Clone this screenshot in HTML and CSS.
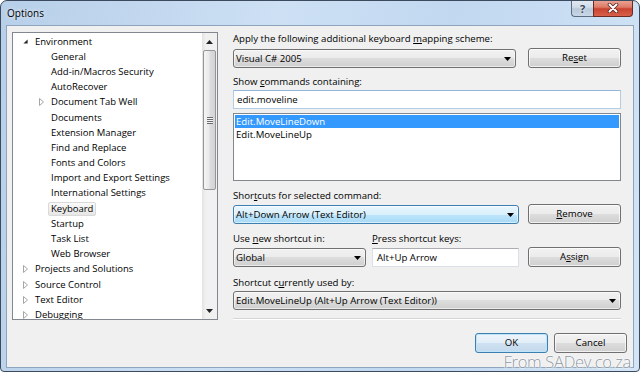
FILE: index.html
```html
<!DOCTYPE html>
<html lang="en">
<head>
<meta charset="UTF-8">
<meta name="viewport" content="width=device-width, initial-scale=1.0">
<title>Options</title>
<link rel="stylesheet" href="styles.css">
</head>
<body>
    <div class="window">
        <!-- Title bar with help and close buttons -->
        <div class="titlebar">
            <span class="title">Options</span>
            <div class="caption">
                <div class="cap-btn help">?</div>
                <div class="cap-btn close">
                    <svg width="12" height="10" viewBox="0 0 12 10"><path d="M2.5 1.5L9.5 8.5M9.5 1.5L2.5 8.5" stroke="#5a2a24" stroke-width="3.6" stroke-linecap="round"/><path d="M2.5 1.5L9.5 8.5M9.5 1.5L2.5 8.5" stroke="#fff" stroke-width="2" stroke-linecap="round"/></svg>
                </div>
            </div>
        </div>

        <div class="client">
            <div class="main">
                <!-- Category tree -->
                <div class="tree">
                    <div class="tree-items">
                        <div class="node l1"><span class="exp"><svg width="5" height="5" viewBox="0 0 5 5"><path d="M4.6 0.4V4.6H0.4z" fill="#262626"/></svg></span><span class="lbl">Environment</span></div>
                        <div class="node l2"><span class="exp"></span><span class="lbl">General</span></div>
                        <div class="node l2"><span class="exp"></span><span class="lbl">Add-in/Macros Security</span></div>
                        <div class="node l2"><span class="exp"></span><span class="lbl">AutoRecover</span></div>
                        <div class="node l2"><span class="exp"><svg width="5" height="8" viewBox="0 0 5 8"><path d="M0.5 0.5L4.5 4L0.5 7.5z" fill="#fff" stroke="#a6a6a6"/></svg></span><span class="lbl">Document Tab Well</span></div>
                        <div class="node l2"><span class="exp"></span><span class="lbl">Documents</span></div>
                        <div class="node l2"><span class="exp"></span><span class="lbl">Extension Manager</span></div>
                        <div class="node l2"><span class="exp"></span><span class="lbl">Find and Replace</span></div>
                        <div class="node l2"><span class="exp"></span><span class="lbl">Fonts and Colors</span></div>
                        <div class="node l2"><span class="exp"></span><span class="lbl">Import and Export Settings</span></div>
                        <div class="node l2"><span class="exp"></span><span class="lbl">International Settings</span></div>
                        <div class="node l2"><span class="exp"></span><span class="lbl sel">Keyboard</span></div>
                        <div class="node l2"><span class="exp"></span><span class="lbl">Startup</span></div>
                        <div class="node l2"><span class="exp"></span><span class="lbl">Task List</span></div>
                        <div class="node l2"><span class="exp"></span><span class="lbl">Web Browser</span></div>
                        <div class="node l1"><span class="exp"><svg width="5" height="8" viewBox="0 0 5 8"><path d="M0.5 0.5L4.5 4L0.5 7.5z" fill="#fff" stroke="#a6a6a6"/></svg></span><span class="lbl">Projects and Solutions</span></div>
                        <div class="node l1"><span class="exp"><svg width="5" height="8" viewBox="0 0 5 8"><path d="M0.5 0.5L4.5 4L0.5 7.5z" fill="#fff" stroke="#a6a6a6"/></svg></span><span class="lbl">Source Control</span></div>
                        <div class="node l1"><span class="exp"><svg width="5" height="8" viewBox="0 0 5 8"><path d="M0.5 0.5L4.5 4L0.5 7.5z" fill="#fff" stroke="#a6a6a6"/></svg></span><span class="lbl">Text Editor</span></div>
                        <div class="node l1"><span class="exp"><svg width="5" height="8" viewBox="0 0 5 8"><path d="M0.5 0.5L4.5 4L0.5 7.5z" fill="#fff" stroke="#a6a6a6"/></svg></span><span class="lbl">Debugging</span></div>
                    </div>
                    <div class="vscroll">
                        <div class="sb-arrow"><svg width="7" height="4" viewBox="0 0 7 4"><path d="M0 4H7L3.5 0z" fill="#222"/></svg></div>
                        <div class="thumb"><span class="grip"></span></div>
                        <div class="sb-fill"></div>
                        <div class="sb-arrow"><svg width="7" height="4" viewBox="0 0 7 4"><path d="M0 0H7L3.5 4z" fill="#222"/></svg></div>
                    </div>
                </div>

                <!-- Keyboard page -->
                <div class="panel">
                    <div class="label">Apply the following additional keyboard <u>m</u>apping scheme:</div>
                    <div class="row first">
                        <div class="combo w-scheme"><span class="combo-text">Visual C# 2005</span><svg width="7" height="4" viewBox="0 0 7 4"><path d="M0 0H7L3.5 4z" fill="#000"/></svg></div>
                        <div class="btn">Re<u>s</u>et</div>
                    </div>

                    <div class="label gap7">Show <u>c</u>ommands containing:</div>
                    <div class="input focus">edit.moveline</div>
                    <div class="listbox">
                        <div class="item selected">Edit.MoveLineDown</div>
                        <div class="item">Edit.MoveLineUp</div>
                    </div>

                    <div class="label gap8">Shor<u>t</u>cuts for selected command:</div>
                    <div class="row">
                        <div class="combo hot w-short"><span class="combo-text">Alt+Down Arrow (Text Editor)</span><svg width="7" height="4" viewBox="0 0 7 4"><path d="M0 0H7L3.5 4z" fill="#000"/></svg></div>
                        <div class="btn"><u>R</u>emove</div>
                    </div>

                    <div class="label-row">
                        <div class="label w-use">Use <u>n</u>ew shortcut in:</div>
                        <div class="label"><u>P</u>ress shortcut keys:</div>
                    </div>
                    <div class="row">
                        <div class="combo w-global"><span class="combo-text">Global</span><svg width="7" height="4" viewBox="0 0 7 4"><path d="M0 0H7L3.5 4z" fill="#000"/></svg></div>
                        <div class="input w-keys">Alt+Up Arrow</div>
                        <div class="btn">A<u>s</u>sign</div>
                    </div>

                    <div class="label gap9">Shortcut c<u>u</u>rrently used by:</div>
                    <div class="combo full"><span class="combo-text">Edit.MoveLineUp (Alt+Up Arrow (Text Editor))</span><svg width="7" height="4" viewBox="0 0 7 4"><path d="M0 0H7L3.5 4z" fill="#000"/></svg></div>

                    <div class="separator"></div>
                </div>
            </div>

            <div class="footer">
                <div class="btn default">OK</div>
                <div class="btn">Cancel</div>
            </div>
        </div>

        <div class="watermark">From SADev.co.za</div>
    </div>
</body>
</html>
```

FILE: styles.css
```css
body {
    margin: 0;
    background: #ffffff;
    font-family: "Open Sans", "Noto Sans", sans-serif;
    font-size: 9.5px;
    color: #000;
}

u {
    text-decoration-thickness: 1px;
    text-underline-offset: 1px;
}

/* Window frame */
.window {
    width: 640px;
    height: 372px;
    box-sizing: border-box;
    border: 1px solid #3b4b5d;
    border-radius: 7px 7px 4px 4px;
    background: linear-gradient(100deg, #b7cfe9 0%, #cde0f4 40%, #c1d8f0 65%, #d2e4f6 100%);
    display: flex;
    flex-direction: column;
    position: relative;
    overflow: hidden;
}

.titlebar {
    height: 24px;
    flex-shrink: 0;
    display: flex;
    align-items: flex-start;
}

.title {
    padding: 5px 0 0 6px;
    line-height: 14px;
    font-size: 10px;
    text-shadow: 0 0 4px rgba(255, 255, 255, 0.9);
}

.caption {
    margin-left: auto;
    margin-right: 6px;
    margin-top: -1px;
    display: flex;
}

.cap-btn {
    height: 17px;
    box-sizing: border-box;
    border: 1px solid #5d6d80;
    border-top: none;
    display: flex;
    align-items: center;
    justify-content: center;
}

.help {
    width: 22px;
    border-right: none;
    border-radius: 0 0 0 4px;
    background: linear-gradient(#e4ebf3, #cfdbe8 45%, #b9c9db 55%, #c9d7e6);
    color: #34465a;
    font-weight: bold;
    font-size: 11px;
    text-shadow: 0 0 2px #fff;
}

.close {
    width: 40px;
    border-color: #6b2a22;
    border-radius: 0 0 4px 0;
    background: linear-gradient(#eaa89a, #dd7a67 45%, #c9432f 55%, #d8604a);
}

/* Client area */
.client {
    margin: 0 5px;
    height: 343px;
    box-sizing: border-box;
    border: 1px solid #8ea5bd;
    background: #f0f0f0;
    display: flex;
    flex-direction: column;
}

.main {
    display: flex;
    padding: 6px 12px 0 5px;
}

/* Tree view */
.tree {
    width: 206px;
    height: 288px;
    box-sizing: border-box;
    border: 1px solid #828790;
    background: #fff;
    display: flex;
}

.tree-items {
    flex: 1;
    overflow: hidden;
    padding-top: 1px;
}

.node {
    height: 15.2px;
    display: flex;
    align-items: center;
    white-space: nowrap;
}

.l1 {
    padding-left: 3px;
}

.l2 {
    padding-left: 19px;
}

.exp {
    width: 16px;
    flex-shrink: 0;
    box-sizing: border-box;
    padding-left: 7px;
    display: flex;
    align-items: center;
}

.lbl {
    padding: 0 2px;
    border: 1px solid transparent;
    border-radius: 2px;
    line-height: 12px;
}

.lbl.sel {
    border-color: #d9d9d9;
    background: linear-gradient(#fafafa, #e6e6e6);
}

.vscroll {
    width: 15px;
    display: flex;
    flex-direction: column;
    background: linear-gradient(to right, #e3e3e3, #f1f1f1 25%, #f0f0f0);
}

.sb-arrow {
    height: 17px;
    display: flex;
    align-items: center;
    justify-content: center;
}

.thumb {
    height: 140px;
    margin: 0 1px;
    box-sizing: border-box;
    border: 1px solid #959595;
    border-radius: 2px;
    background: linear-gradient(to right, #f5f5f5, #e9e9e9 45%, #dcdcdc 55%, #d3d3d3);
    display: flex;
    align-items: center;
    justify-content: center;
}

.grip {
    width: 6px;
    height: 7px;
    background: repeating-linear-gradient(#6a6a6a 0 1px, #f4f4f4 1px 2px);
}

.sb-fill {
    flex: 1;
}

/* Right page */
.panel {
    width: 388px;
    margin-left: 15px;
    display: flex;
    flex-direction: column;
    font-size: 9.65px;
}

.label {
    height: 14px;
    line-height: 14px;
    white-space: nowrap;
}

.gap7 {
    margin-top: 7px;
}

.gap8 {
    margin-top: 8px;
}

.gap9 {
    margin-top: 9px;
}

.row {
    display: flex;
    align-items: flex-end;
    height: 20px;
    margin-top: 1px;
}

.row.first {
    margin-top: 2px;
}

.row .btn {
    margin-left: auto;
}

.label-row {
    display: flex;
    margin-top: 8px;
}

.w-use {
    width: 139px;
}

.combo {
    height: 19px;
    box-sizing: border-box;
    border: 1px solid #707070;
    border-radius: 3px;
    padding: 0 4px 0 2px;
    background: linear-gradient(#f2f2f2, #ebebeb 50%, #dddddd 50%, #cfcfcf);
    box-shadow: inset 0 0 0 1px rgba(255, 255, 255, 0.55);
    display: flex;
    align-items: center;
    white-space: nowrap;
}

.combo.hot {
    border-color: #3c7fb1;
    background: linear-gradient(#eaf6fd, #d9f0fc 50%, #bee6fd 50%, #a7d9f5);
}

.combo-text {
    flex: 1;
}

.w-scheme {
    width: 283px;
}

.w-short {
    width: 286px;
}

.w-global {
    width: 133px;
}

.combo.full {
    margin-top: 1px;
}

.input {
    height: 19px;
    box-sizing: border-box;
    border: 1px solid #dbdfe6;
    border-top-color: #abadb3;
    background: #fff;
    padding-left: 3px;
    line-height: 17px;
    white-space: nowrap;
}

.input.focus {
    margin-top: 1px;
    border-color: #b4cde6;
    border-top-color: #93b6da;
}

.w-keys {
    width: 147px;
    margin-left: 6px;
    padding-left: 4px;
}

.listbox {
    margin-top: 4px;
    height: 68px;
    box-sizing: border-box;
    border: 1px solid #828790;
    background: #fff;
    padding: 1px;
}

.item {
    height: 13px;
    line-height: 13px;
    padding-left: 1px;
}

.item.selected {
    background: #3399ff;
    color: #fff;
}

.separator {
    margin-top: 8px;
    height: 1px;
    border-top: 1px solid #d5d5d5;
    background: #fff;
}

/* Buttons */
.btn {
    width: 93px;
    height: 20px;
    box-sizing: border-box;
    border: 1px solid #707070;
    border-radius: 3px;
    background: linear-gradient(#f2f2f2, #ebebeb 50%, #dddddd 50%, #cfcfcf);
    box-shadow: inset 0 0 0 1px rgba(255, 255, 255, 0.7);
    text-align: center;
    line-height: 18px;
}

.footer {
    display: flex;
    justify-content: flex-end;
    gap: 6px;
    padding: 13px 6px 0 0;
    font-size: 9.65px;
}

.footer .btn {
    width: 73px;
}

.btn.default {
    border-color: #3c7fb1;
    background: linear-gradient(#eef5fb, #e1edf7 50%, #cfe1f1 50%, #c3d9ed);
    box-shadow: inset 0 0 0 1px #bfe3f9;
}

.watermark {
    position: absolute;
    right: 8px;
    bottom: 0;
    font-size: 16.5px;
    line-height: 18px;
    font-weight: 300;
    letter-spacing: -0.3px;
    color: #8d98a4;
    text-shadow: 0 0 2px #fff, 0 0 2px #fff, 0 0 1px #fff;
}
```
